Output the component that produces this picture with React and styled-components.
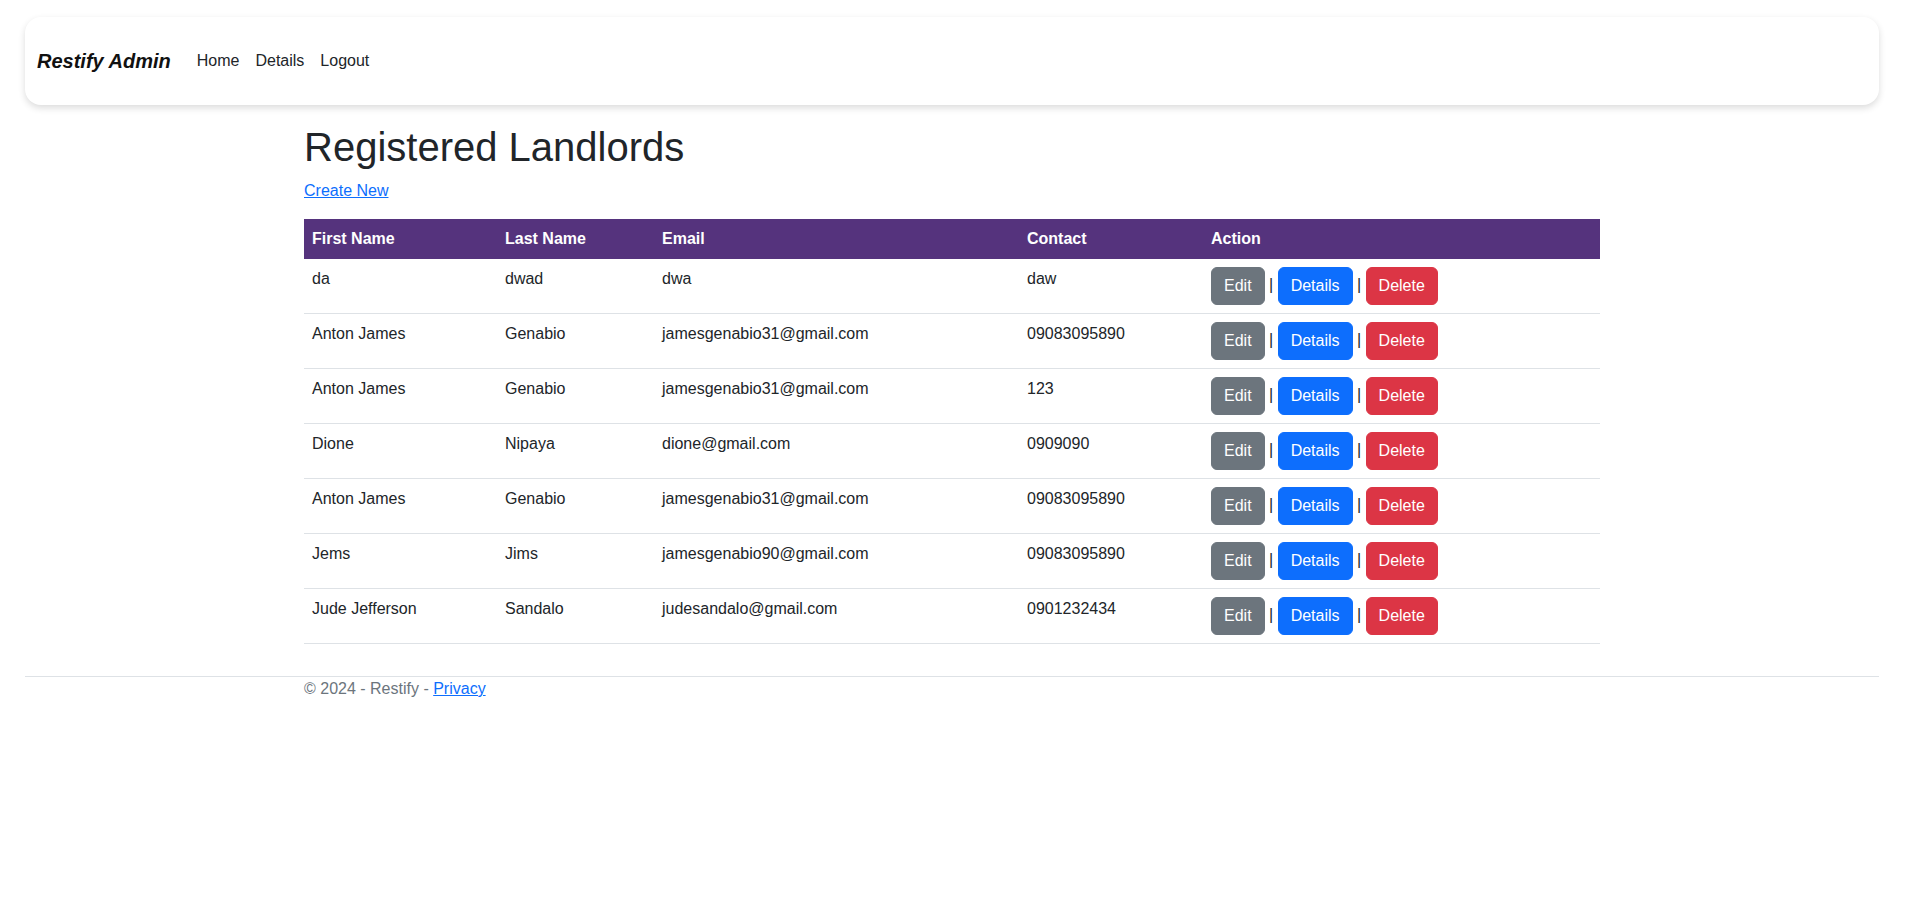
import React from 'react';
import styled, { createGlobalStyle } from 'styled-components';

const GlobalStyle = createGlobalStyle`
	*, *::before, *::after {
		box-sizing: border-box;
	}
	body {
		margin: 0;
		font-family: "Liberation Sans", Arial, sans-serif;
		font-size: 16px;
		line-height: 1.5;
		color: #212529;
		background: #fff;
	}
`;

const Page = styled.div`
	max-width: 1904px;
`;

const Navbar = styled.nav`
	display: flex;
	align-items: center;
	height: 88px;
	margin: 17px 25px 18px;
	padding: 0 12px;
	background: #fff;
	border-radius: 16px;
	box-shadow: 0 3px 7px rgba(0, 0, 0, 0.14);
`;

const Brand = styled.a`
	font-size: 20px;
	font-weight: bold;
	font-style: italic;
	color: #111;
	text-decoration: none;
	margin-right: 18px;
`;

const NavLink = styled.a`
	padding: 8px;
	color: #212529;
	text-decoration: none;
`;

const Container = styled.div`
	max-width: 1320px;
	margin: 0 auto;
	padding: 0 12px ${p => p.$bottom || 0}px;
`;

const Title = styled.h1`
	margin: 0 0 8px;
	font-size: 40px;
	font-weight: 500;
	line-height: 1.2;
`;

const Para = styled.p`
	margin: 0 0 16px;
`;

const Link = styled.a`
	color: #0d6efd;
	text-decoration: underline;
`;

const Table = styled.table`
	width: 100%;
	border-collapse: collapse;
	table-layout: fixed;
	margin-bottom: 16px;
	vertical-align: top;
`;

const Th = styled.th`
	width: ${p => p.$w ? `${p.$w}px` : 'auto'};
	background: #55337d;
	color: #fff;
	padding: 8px;
	text-align: left;
	font-weight: bold;
`;

const Td = styled.td`
	padding: 8px;
	border-bottom: 1px solid #dee2e6;
	vertical-align: top;
`;

const colors = {
	secondary: '#6c757d',
	primary: '#0d6efd',
	danger: '#dc3545',
};

const Btn = styled.a`
	display: inline-block;
	padding: 6px 12px;
	font-size: 16px;
	line-height: 24px;
	color: #fff;
	text-decoration: none;
	vertical-align: middle;
	background: ${p => colors[p.$variant]};
	border: 1px solid ${p => colors[p.$variant]};
	border-radius: 6px;
	cursor: pointer;
`;

const Footer = styled.footer`
	margin: 0 25px;
	border-top: 1px solid #dee2e6;
	color: #6c757d;
`;

const landlords = [
	['da', 'dwad', 'dwa', 'daw'],
	['Anton James', 'Genabio', 'jamesgenabio31@gmail.com', '09083095890'],
	['Anton James', 'Genabio', 'jamesgenabio31@gmail.com', '123'],
	['Dione', 'Nipaya', 'dione@gmail.com', '0909090'],
	['Anton James', 'Genabio', 'jamesgenabio31@gmail.com', '09083095890'],
	['Jems', 'Jims', 'jamesgenabio90@gmail.com', '09083095890'],
	['Jude Jefferson', 'Sandalo', 'judesandalo@gmail.com', '0901232434'],
];

const App = () => {
	return (
		<Page>
			<GlobalStyle />
			<Navbar>
				<Brand href="#">Restify Admin</Brand>
				<NavLink href="#">Home</NavLink>
				<NavLink href="#">Details</NavLink>
				<NavLink href="#">Logout</NavLink>
			</Navbar>
			<Container $bottom={16}>
				<Title>Registered Landlords</Title>
				<Para><Link href="#">Create New</Link></Para>
				<Table>
					<thead>
						<tr>
							<Th $w={193}>First Name</Th>
							<Th $w={157}>Last Name</Th>
							<Th $w={365}>Email</Th>
							<Th $w={184}>Contact</Th>
							<Th>Action</Th>
						</tr>
					</thead>
					<tbody>
						{landlords.map((row, i) => (
							<tr key={i}>
								{row.map((cell, j) => <Td key={j}>{cell}</Td>)}
								<Td>
									<Btn $variant="secondary">Edit</Btn> | <Btn $variant="primary">Details</Btn> | <Btn $variant="danger">Delete</Btn>
								</Td>
							</tr>
						))}
					</tbody>
				</Table>
			</Container>
			<Footer>
				<Container>
					&copy; 2024 - Restify - <Link href="#">Privacy</Link>
				</Container>
			</Footer>
		</Page>
	);
};

export default App;
